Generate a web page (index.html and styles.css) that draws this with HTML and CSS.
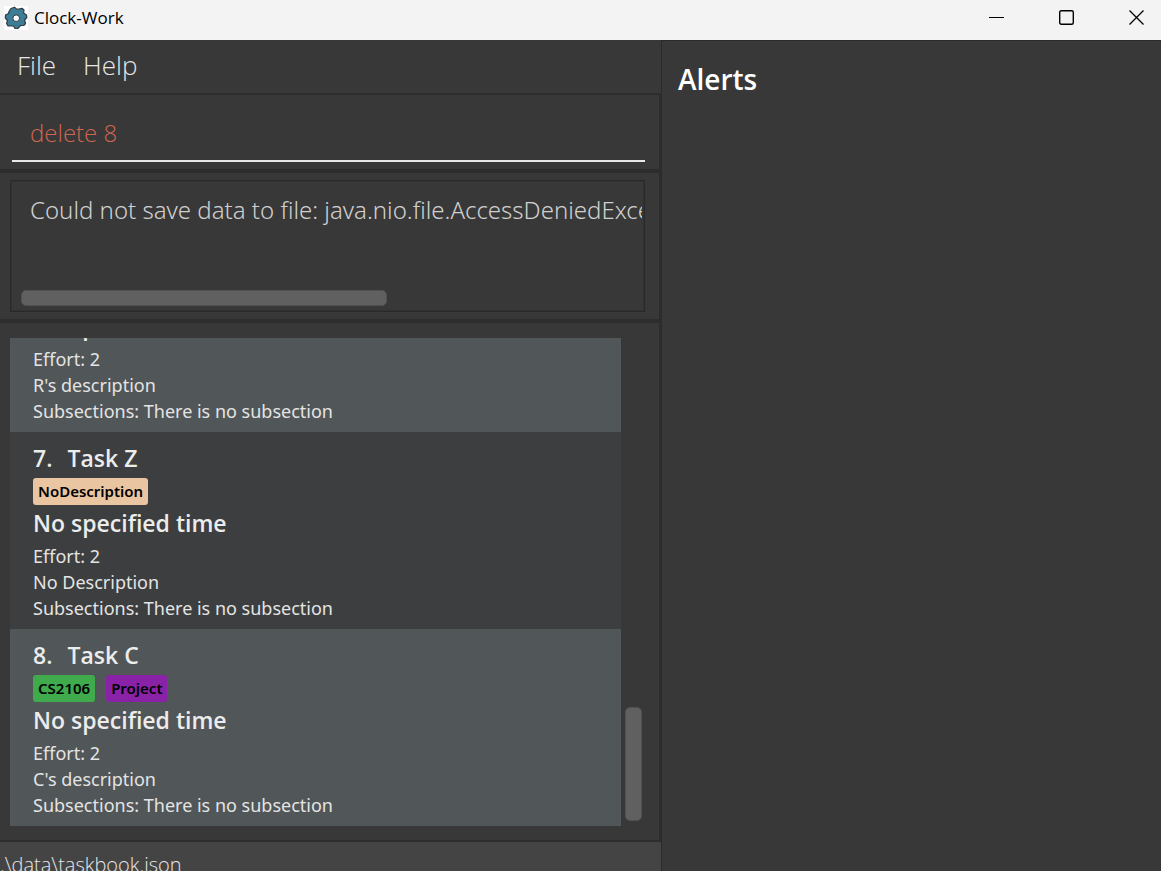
FILE: index.html
```html
<!DOCTYPE html>
<html lang="en">
<head>
<meta charset="utf-8">
<title>Clock-Work</title>
<link rel="stylesheet" href="styles.css">
</head>
<body>
<div class="window">
  <header class="titlebar">
    <svg class="logo" width="24" height="24" viewBox="0 0 24 24" aria-hidden="true">
      <rect width="24" height="24" fill="#fff"/>
      <path d="M7 2.500L10.500 1.200L12.500 3.200L15 3L18 2.300L20 4L19.600 7L22.500 9L22.800 11.500L20.600 14L21.500 17.500L20 19.300L16.500 19.500L14 22.300L11 22.500L9.500 20L7 19.800L4 20L2.600 17.500L3.500 14.500L1.300 12L1.500 9L4.500 7.500L5 5.500Z" fill="#3d7d96" stroke="#333c42" stroke-width="1.200" stroke-linejoin="round"/>
      <circle cx="12.200" cy="12.200" r="3.300" fill="#fff" stroke="#333c42"/>
    </svg>
    <span class="app-name">Clock-Work</span>
    <div class="controls">
      <button class="control" aria-label="Minimize"><svg width="16" height="16" viewBox="0 0 16 16"><path d="M0 7.500H15" fill="none" stroke="#000"/></svg></button>
      <button class="control" aria-label="Maximize"><svg width="16" height="16" viewBox="0 0 16 16"><rect x="0.700" y="0.700" width="13.600" height="13.600" rx="1.500" fill="none" stroke="#000" stroke-width="1.400"/></svg></button>
      <button class="control" aria-label="Close"><svg width="16" height="16" viewBox="0 0 16 16"><path d="M0.500 0.500L14.500 14.500M14.500 0.500L0.500 14.500" fill="none" stroke="#000" stroke-width="1.300"/></svg></button>
    </div>
  </header>
  <div class="content">
    <main class="main">
      <nav class="menubar">
        <button class="menu">File</button>
        <button class="menu">Help</button>
      </nav>
      <section class="pane command-pane">
        <input class="command" type="text" value="delete 8" aria-label="Command">
      </section>
      <section class="pane result-pane">
        <div class="result">
          <textarea class="result-text" readonly rows="1" wrap="off" aria-label="Result">Could not save data to file: java.nio.file.AccessDeniedException</textarea>
          <div class="thumb thumb-x"></div>
        </div>
      </section>
      <section class="pane list-pane">
        <div class="task-list">
          <article class="task task-even">
            <p class="time">No specified time</p>
            <p class="detail">Effort: 2</p>
            <p class="detail">R's description</p>
            <p class="detail">Subsections: There is no subsection</p>
          </article>
          <article class="task">
            <h2 class="name"><span class="index">7.</span>Task Z</h2>
            <div class="tags"><span class="tag tag-peach">NoDescription</span></div>
            <p class="time">No specified time</p>
            <p class="detail">Effort: 2</p>
            <p class="detail">No Description</p>
            <p class="detail">Subsections: There is no subsection</p>
          </article>
          <article class="task task-even">
            <h2 class="name"><span class="index">8.</span>Task C</h2>
            <div class="tags"><span class="tag tag-green">CS2106</span><span class="tag tag-purple">Project</span></div>
            <p class="time">No specified time</p>
            <p class="detail">Effort: 2</p>
            <p class="detail">C's description</p>
            <p class="detail">Subsections: There is no subsection</p>
          </article>
        </div>
        <div class="track"><div class="thumb thumb-y"></div></div>
      </section>
      <footer class="status">.\data\taskbook.json</footer>
    </main>
    <aside class="alerts">
      <h1 class="alerts-title">Alerts</h1>
    </aside>
  </div>
</div>
</body>
</html>
```
FILE: styles.css
```css
* {
  box-sizing: border-box;
}

body {
  margin: 0;
  background: #383838;
  font-family: "Open Sans", "Noto Sans", sans-serif;
}

button,
input,
textarea {
  font-family: inherit;
  margin: 0;
  border: 0;
  background: none;
}

.window {
  display: flex;
  flex-direction: column;
  height: 100vh;
  overflow: hidden;
}

.titlebar {
  display: flex;
  align-items: center;
  flex: none;
  height: 40px;
  padding: 0 8px 5px 4px;
  background: #f3f3f3;
}

.app-name {
  flex: 1;
  padding-left: 6px;
  font-size: 17px;
  line-height: 24px;
  color: #000;
}

.controls {
  display: flex;
  gap: 38px;
}

.control {
  display: flex;
  align-items: center;
  justify-content: center;
  width: 32px;
  height: 32px;
  padding: 0;
}

.content {
  display: grid;
  grid-template-columns: minmax(0, 661fr) minmax(0, 500fr);
  flex: 1;
  min-height: 0;
}

.main {
  display: flex;
  flex-direction: column;
  min-height: 0;
}

.menubar {
  display: flex;
  flex: none;
  align-items: flex-start;
  gap: 27px;
  height: 53px;
  padding: 0 17px;
}

.menu {
  padding: 0;
  font-size: 26px;
  font-weight: 300;
  line-height: 50px;
  color: #e6e6e6;
}

.pane {
  border: 2px solid #2d2d2d;
  border-left: 0;
}

.command-pane {
  flex: none;
  height: 78px;
  padding: 10px 14px 8px 12px;
}

.command {
  display: block;
  width: 100%;
  height: 57px;
  padding: 0 18px;
  border-bottom: 2px solid #e8e8e8;
  font-size: 24px;
  font-weight: 300;
  color: #d06651;
}

.result-pane {
  flex: none;
  height: 150px;
  padding: 7px 14px 8px 10px;
}

.result {
  display: flex;
  flex-direction: column;
  justify-content: space-between;
  height: 132px;
  padding: 10px 2px 5px 10px;
  border: 1px solid #292929;
  box-shadow: inset 0 0 0 1px #323232;
}

.result-text {
  display: block;
  width: 100%;
  height: 40px;
  padding: 0 0 0 9px;
  overflow: hidden;
  resize: none;
  font-family: "Noto Sans", "Open Sans", sans-serif;
  font-size: 24px;
  font-weight: 300;
  line-height: 38px;
  color: #d0d0d0;
}

.thumb {
  border: 1px solid #515151;
  border-radius: 5px;
  background: #606060;
}

.thumb-x {
  width: 59%;
  height: 16px;
}

.list-pane {
  display: flex;
  flex: 1;
  min-height: 0;
  padding: 15px 18px 14px 10px;
}

.task-list {
  display: flex;
  flex: 1;
  flex-direction: column;
  justify-content: flex-end;
  overflow: hidden;
}

.task {
  display: flex;
  flex: none;
  flex-direction: column;
  padding: 10px 23px 8px;
  background: #3c3e3f;
  color: #ececec;
}

.task-even {
  background: #515658;
}

.name,
.time {
  margin: 0;
  font-size: 23px;
  font-weight: 600;
  line-height: 32px;
}

.time {
  margin-bottom: 4px;
}

.name {
  display: flex;
  gap: 15px;
}

.tags {
  display: flex;
  gap: 11px;
  margin: 4px 0 2px;
}

.tag {
  padding: 0 5px;
  border-radius: 3px;
  font-family: "Noto Sans", "Open Sans", sans-serif;
  font-size: 15px;
  font-weight: 600;
  line-height: 27px;
  color: #000;
}

.tag-peach {
  background: #e9c5a2;
}

.tag-green {
  background: #3fab4c;
}

.tag-purple {
  background: #8a22a8;
}

.detail {
  margin: 0;
  font-family: "Noto Sans", "Open Sans", sans-serif;
  font-size: 18px;
  line-height: 26px;
  color: #e4e4e4;
}

.track {
  display: flex;
  flex: none;
  flex-direction: column;
  justify-content: flex-end;
  width: 20px;
  padding: 0 0 5px 4px;
}

.thumb-y {
  height: 114px;
  margin-right: -1px;
}

.status {
  flex: none;
  height: 29px;
  overflow: hidden;
  background: #444444;
  font-size: 20px;
  font-weight: 300;
  line-height: 46px;
  color: #e6e6e6;
}

.alerts {
  padding: 16px;
  border: solid #2b2b2b;
  border-width: 1px 0 0 1px;
}

.alerts-title {
  margin: 0;
  font-size: 28px;
  font-weight: 600;
  line-height: 44px;
  color: #fff;
}
```
